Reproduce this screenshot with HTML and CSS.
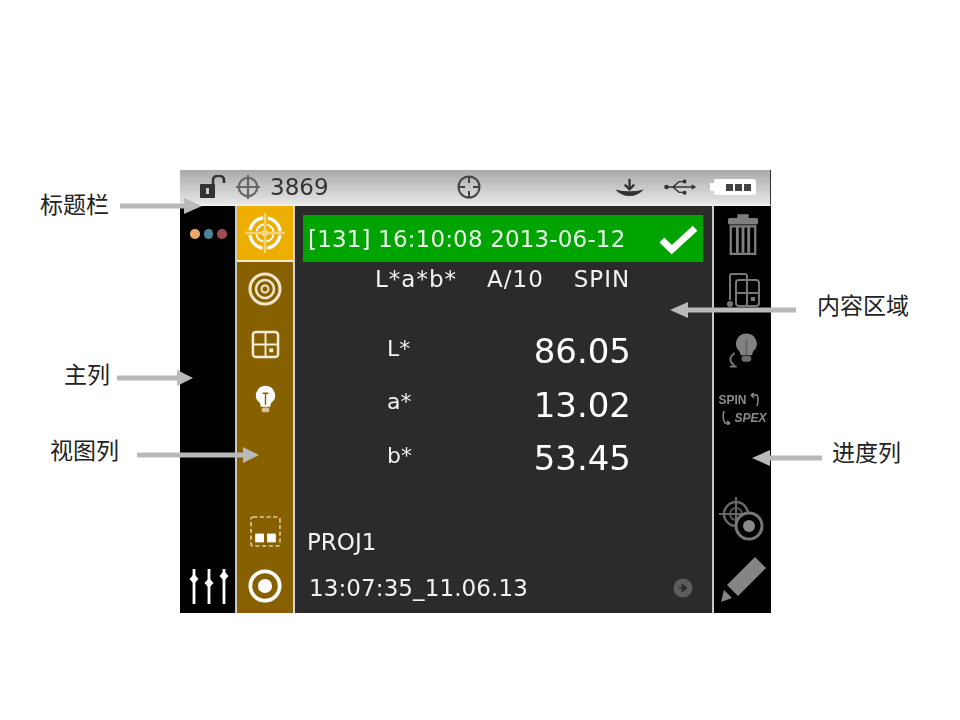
FILE: index.html
```html
<!DOCTYPE html>
<html lang="zh">
<head>
<meta charset="utf-8">
<title>Instrument screen</title>
<link rel="stylesheet" href="styles.css">
</head>
<body>
<div class="stage">
  <div class="device">
    <header class="titlebar">
      <div class="title-left">
        <svg class="ico-lock" viewBox="0 0 28 24"><rect x="1" y="9" width="15" height="14" rx="1" fill="#333"/><rect x="7" y="13" width="3" height="6" fill="#ccc"/><path d="M14 9V5a5 4 0 0 1 11 0v3" fill="none" stroke="#333" stroke-width="2.6"/></svg>
        <svg class="ico-cross" viewBox="0 0 26 26"><circle cx="13" cy="13" r="10" fill="none" stroke="#666" stroke-width="2.4"/><path d="M13 0v26M0 13h26" stroke="#666" stroke-width="2.4"/></svg>
        <span class="count">3869</span>
      </div>
      <svg class="ico-target" viewBox="0 0 26 26"><circle cx="13" cy="13" r="10.5" fill="none" stroke="#444" stroke-width="2"/><path d="M13 2v7M13 17v7M2 13h7M17 13h7" stroke="#444" stroke-width="2"/></svg>
      <div class="title-right">
        <svg class="ico-dl" viewBox="0 0 32 18"><path d="M16 0v9M11 6l5 5 5-5" fill="none" stroke="#333" stroke-width="2.4"/><path d="M1 11q15 4 30 0q-6 7-15 7t-15-7z" fill="#333"/></svg>
        <svg class="ico-usb" viewBox="0 0 36 20"><path d="M3 10h30M10 10l7-6h5M10 10l7 6h5" fill="none" stroke="#333" stroke-width="1.6"/><circle cx="3" cy="10" r="2.5" fill="#333"/><circle cx="23" cy="4" r="2.2" fill="#333"/><circle cx="23" cy="16.500" r="2.2" fill="#333"/><path d="M31 7l5 3-5 3z" fill="#333"/></svg>
        <div class="battery-wrap"><span class="battery-nub"></span><div class="battery"><i></i><i></i><i></i></div></div>
      </div>
    </header>
    <div class="panes">
      <nav class="col-main">
        <div class="dots"><i class="dot-a"></i><i class="dot-b"></i><i class="dot-c"></i></div>
        <svg class="ico-sliders" viewBox="0 0 40 36"><g stroke="#fff" stroke-width="2.800"><path d="M5 1v35M20 1v35M35 1v35"/></g><g fill="#fff"><path d="M5 6l4.500 5-4.500 5-4.500-5z"/><path d="M20 10l4.500 5-4.500 5-4.500-5z"/><path d="M35 3l4.500 5-4.500 5-4.500-5z"/></g></svg>
      </nav>
      <nav class="col-view">
        <div class="view-active">
          <svg class="ico-reticle" viewBox="0 0 44 44"><circle cx="22" cy="22" r="16" fill="none" stroke="#fff" stroke-width="3.400" stroke-dasharray="20 5.130" stroke-dashoffset="-2.560"/><circle cx="22" cy="22" r="9" fill="none" stroke="#fff" stroke-width="2" stroke-dasharray="11 3.140" stroke-dashoffset="-1.570"/><circle cx="22" cy="22" r="3" fill="#fff"/><path d="M22 1v42M1 22h42" stroke="#f6d27a" stroke-width="2.600"/></svg>
        </div>
        <div class="view-list">
          <svg class="ico-concentric" viewBox="0 0 34 34"><circle cx="17" cy="17" r="15" fill="none" stroke="#f1e6cd" stroke-width="3"/><circle cx="17" cy="17" r="9" fill="none" stroke="#f1e6cd" stroke-width="2.500"/><circle cx="17" cy="17" r="3.500" fill="none" stroke="#f1e6cd" stroke-width="2"/></svg>
          <svg class="ico-grid" viewBox="0 0 30 30"><rect x="2" y="2" width="26" height="26" rx="3" fill="none" stroke="#f5ecd8" stroke-width="2.600"/><path d="M15 2v26M2 15h26" stroke="#f5ecd8" stroke-width="2"/><rect x="19" y="19" width="4" height="4" fill="#f5ecd8"/></svg>
          <svg class="ico-bulb" viewBox="0 0 22 30"><path d="M11 1a10 10 0 0 0-6 18q1 2 1 4h10q0-2 1-4a10 10 0 0 0-6-18z" fill="#fff"/><path d="M8 9h6M11 9v12" stroke="#876100" stroke-width="1.500"/><rect x="7" y="24" width="8" height="5" rx="2" fill="#d9c493"/></svg>
        </div>
        <div class="view-bottom">
          <svg class="ico-dashed" viewBox="0 0 30 30"><rect x="1" y="1" width="28" height="28" rx="2" fill="none" stroke="#dccba0" stroke-width="1.600" stroke-dasharray="4 2.500"/><rect x="5" y="17" width="8.500" height="8.500" fill="#fff"/><rect x="16.500" y="17" width="8.500" height="8.500" fill="#fff"/></svg>
          <svg class="ico-ring" viewBox="0 0 36 36"><circle cx="18" cy="18" r="15.500" fill="none" stroke="#fff" stroke-width="4"/><circle cx="18" cy="18" r="7.500" fill="#fff"/></svg>
        </div>
      </nav>
      <main class="content">
        <div class="status">
          <span>[131] 16:10:08 2013-06-12</span>
          <svg class="ico-check" viewBox="0 0 40 30"><path d="M3 16l10 10L37 4" fill="none" stroke="#fff" stroke-width="7"/></svg>
        </div>
        <div class="meta"><span>L*a*b*</span><span>A/10</span><span>SPIN</span></div>
        <div class="readings">
          <div class="reading"><span class="key">L*</span><span class="val">86.05</span></div>
          <div class="reading"><span class="key">a*</span><span class="val">13.02</span></div>
          <div class="reading"><span class="key">b*</span><span class="val">53.45</span></div>
        </div>
        <div class="foot">
          <div class="proj">PROJ1</div>
          <div class="stamp">
            <span>13:07:35_11.06.13</span>
            <svg class="ico-next" viewBox="0 0 20 20"><circle cx="10" cy="10" r="9.500" fill="#5c5c5c"/><path d="M5 10h5M9 6l5 4-5 4z" fill="#2c2c2c" stroke="#2c2c2c"/></svg>
          </div>
        </div>
      </main>
      <aside class="col-progress">
        <div class="prog-top">
          <svg class="ico-trash" viewBox="0 0 34 44"><path d="M11 1h12v4H11z" fill="#7f7f7f"/><rect x="1" y="5" width="32" height="7" rx="2" fill="#7f7f7f"/><path d="M4 14h26v29H4z" fill="none" stroke="#7f7f7f" stroke-width="2.400"/><path d="M11 14v28M17 14v28M23 14v28" stroke="#7f7f7f" stroke-width="3"/></svg>
          <svg class="ico-grids" viewBox="0 0 36 36"><path d="M5 28V4q0-2 2-2h13q2 0 2 2v4" fill="none" stroke="#777" stroke-width="2"/><rect x="11" y="8" width="23" height="26" rx="3" fill="#000" stroke="#777" stroke-width="2"/><path d="M22 8v26M11 21h23" stroke="#777" stroke-width="2"/><rect x="26" y="25" width="4" height="4" fill="#777"/><circle cx="5" cy="32" r="3" fill="#777"/></svg>
          <svg class="ico-bulb-spin" viewBox="0 0 34 36"><path d="M21 0a10.500 10.500 0 0 0-7 18.500q1 2 1 4h12q0-2 1-4a10.500 10.500 0 0 0-7-18.500z" fill="#818181"/><path d="M21 7v15" stroke="#666" stroke-width="2"/><rect x="16" y="23" width="10" height="6" rx="2.500" fill="#6a6a6a"/><path d="M9 20q-6 4-4 9l4 5" fill="none" stroke="#777" stroke-width="2"/><path d="M4 34h7" stroke="#777" stroke-width="2"/></svg>
          <div class="spinspex">
            <div class="spin-line">SPIN<svg class="ico-turn" viewBox="0 0 10 14"><path d="M2 2h5q2 4 0 11M1 2l3-2M1 2l3 3" fill="none" stroke="#8c8c8c" stroke-width="1.500"/></svg></div>
            <div class="spex-line"><svg class="ico-turn" viewBox="0 0 10 14"><path d="M3 0q-2 7 1 12h5M9 12l-3-2M9 12l-3 2" fill="none" stroke="#8c8c8c" stroke-width="1.500"/></svg><em>SPEX</em></div>
          </div>
        </div>
        <div class="prog-bottom">
          <svg class="ico-combo" viewBox="0 0 46 46"><circle cx="18" cy="18" r="12" fill="none" stroke="#666" stroke-width="2.500"/><circle cx="18" cy="18" r="6" fill="none" stroke="#555" stroke-width="2"/><path d="M18 1v28M1 18h28" stroke="#666" stroke-width="2"/><circle cx="31" cy="30" r="13" fill="#000" stroke="#777" stroke-width="3"/><circle cx="31" cy="30" r="6" fill="#8a8a8a"/></svg>
          <svg class="ico-pen" viewBox="0 0 48 48"><path d="M36 1l11 11-28 28-11-11z" fill="#858585"/><path d="M5 34l8 8-11 4z" fill="#858585"/></svg>
        </div>
      </aside>
    </div>
  </div>

  <div class="note note-title">标题栏</div>
  <div class="note note-main">主列</div>
  <div class="note note-view">视图列</div>
  <div class="note note-content">内容区域</div>
  <div class="note note-progress">进度列</div>

  <svg class="arrow arrow-title" viewBox="0 0 82 16"><path d="M0 5.500h64V0l18 8-18 8v-5.500H0z"/></svg>
  <svg class="arrow arrow-main" viewBox="0 0 76 16"><path d="M0 5.500h60V0l16 8-16 8v-5.500H0z"/></svg>
  <svg class="arrow arrow-view" viewBox="0 0 122 16"><path d="M0 5.500h106V0l16 8-16 8v-5.500H0z"/></svg>
  <svg class="arrow arrow-content" viewBox="0 0 126 16"><path d="M126 5.500H18V0L0 8l18 8v-5.500h108z"/></svg>
  <svg class="arrow arrow-progress" viewBox="0 0 70 16"><path d="M70 5.500H18V0L0 8l18 8v-5.500h52z"/></svg>
</div>
</body>
</html>
```

FILE: styles.css
```css
* { box-sizing: border-box; }
html, body { margin: 0; background: #fff; }
body { font-family: "DejaVu Sans", sans-serif; }
svg { display: block; flex: none; }
.stage { position: relative; width: 960px; height: 720px; padding: 170px 0 0 180px; overflow: hidden; }

.device { width: 591px; height: 443px; display: flex; flex-direction: column; filter: blur(0.4px); }

.titlebar {
  height: 36px; display: flex; align-items: center;
  padding: 0 14px 0 19px; color: #333;
  background: linear-gradient(#a9a9a9, #d4d4d4 70%, #e6e6e6);
  border-right: 1px solid #333; border-bottom: 2px solid #efefef;
}
.title-left { display: flex; align-items: center; gap: 9px; }
.count { font-size: 23px; margin-left: 1px; }
.ico-lock { width: 28px; height: 24px; }
.ico-cross { width: 24px; height: 24px; }
.ico-target { width: 26px; height: 26px; margin-left: 127px; }
.title-right { display: flex; align-items: center; gap: 18px; margin-left: auto; }
.ico-dl { width: 31px; height: 17px; }
.ico-usb { width: 34px; height: 18px; margin-right: -5px; }
.battery-wrap { display: flex; align-items: center; }
.battery-nub { width: 4px; height: 8px; background: #fff; }
.battery {
  width: 42px; height: 16px; background: #fff; border-radius: 2px;
  display: flex; justify-content: flex-end; align-items: center; gap: 2px; padding-right: 5px;
}
.battery i { width: 7px; height: 7px; background: #444; }

.panes { flex: 1; display: flex; min-height: 0; }

.col-main {
  width: 57px; background: #000; border-right: 2px solid #c8c8c8;
  display: flex; flex-direction: column; justify-content: space-between; padding: 23px 0 9px 10px;
}
.dots { display: flex; gap: 4px; }
.dots i { width: 9.500px; height: 9.500px; border-radius: 50%; }
.dot-a { background: #e8a868; }
.dot-b { background: #4b8496; }
.dot-c { background: #a34a58; }
.ico-sliders { width: 40px; height: 36px; margin-left: -1px; }

.col-view { width: 58px; background: #876100; border-right: 2px solid #d6d6d6; display: flex; flex-direction: column; }
.view-active { height: 56px; flex: none; background: #edae00; border-bottom: 2px solid #f2ead8; display: flex; align-items: center; justify-content: center; }
.ico-reticle { width: 42px; height: 42px; }
.view-list { flex: 1; display: flex; flex-direction: column; align-items: center; gap: 24px; padding-top: 10px; }
.view-bottom { display: flex; flex-direction: column; align-items: center; gap: 22px; padding-bottom: 10px; }
.ico-concentric { width: 34px; height: 34px; }
.ico-grid { width: 29px; height: 29px; }
.ico-dashed { width: 31px; height: 31px; }
.ico-bulb { width: 21px; height: 30px; margin-top: 1px; }
.ico-ring { width: 34px; height: 34px; }

.content { flex: 1; background: #2b2b2b; color: #f2f2f2; display: flex; flex-direction: column; padding: 9px 9px 0 8px; min-width: 0; }
.status {
  height: 47px; flex: none; background: #00a400; display: flex; align-items: center; justify-content: space-between;
  padding: 0 5px; font-size: 23px; letter-spacing: 0.16px; color: #eaf8ea;
}
.ico-check { width: 39px; height: 30px; }
.meta { display: flex; gap: 30px; font-size: 23px; letter-spacing: 1px; margin: 3px 0 0 72px; height: 28px; line-height: 28px; }
.readings { margin-top: 38px; display: flex; flex-direction: column; gap: 13.500px; }
.reading { display: flex; align-items: center; justify-content: space-between; height: 40px; padding: 0 72px 0 84px; }
.key { font-size: 22px; margin-top: -6px; }
.val { font-size: 34px; color: #fff; }
.foot { margin-top: auto; padding: 0 0 12px 4px; }
.proj { font-size: 23px; line-height: 26px; margin-top: -1px; }
.stamp { display: flex; align-items: center; justify-content: space-between; margin-top: 20px; font-size: 23px; letter-spacing: 0.1px; line-height: 26px; padding: 0 10px 0 2px; }
.ico-next { width: 20px; height: 20px; }

.col-progress { width: 59px; background: #000; border-left: 2px solid #c8c8c8; display: flex; flex-direction: column; justify-content: space-between; align-items: center; padding: 7px 0 9px; }
.prog-top { display: flex; flex-direction: column; align-items: center; }
.ico-trash { width: 32px; height: 42px; }
.ico-grids { width: 36px; height: 36px; margin-top: 17px; }
.ico-bulb-spin { width: 33px; height: 36px; margin-top: 25px; }
.spinspex { font-size: 12px; color: #8c8c8c; font-weight: bold; font-family: "Liberation Sans", sans-serif; margin-top: 24px; width: 48px; }
.spinspex em { font-style: italic; }
.spin-line, .spex-line { display: flex; gap: 3px; align-items: center; height: 14px; }
.spex-line { justify-content: flex-end; margin-top: 4px; }
.ico-turn { width: 10px; height: 14px; }
.prog-bottom { display: flex; flex-direction: column; align-items: center; gap: 14px; margin-left: -4px; }
.ico-combo { width: 46px; height: 46px; }
.ico-pen { width: 48px; height: 48px; margin-left: 4px; }

.note { position: absolute; font-family: "Noto Sans CJK SC", sans-serif; font-size: 23px; line-height: 30px; color: #222; white-space: nowrap; }
.note-title { left: 40px; top: 188px; }
.note-main { left: 64px; top: 358px; }
.note-view { left: 50px; top: 434px; }
.note-content { left: 817px; top: 289px; }
.note-progress { left: 832px; top: 436px; }

.arrow { position: absolute; fill: #b9b9b9; height: 16px; }
.arrow-title { left: 120px; top: 198px; width: 82px; }
.arrow-main { left: 117px; top: 370px; width: 76px; }
.arrow-view { left: 137px; top: 447px; width: 122px; }
.arrow-content { left: 670px; top: 302px; width: 126px; }
.arrow-progress { left: 752px; top: 450px; width: 70px; }
```
